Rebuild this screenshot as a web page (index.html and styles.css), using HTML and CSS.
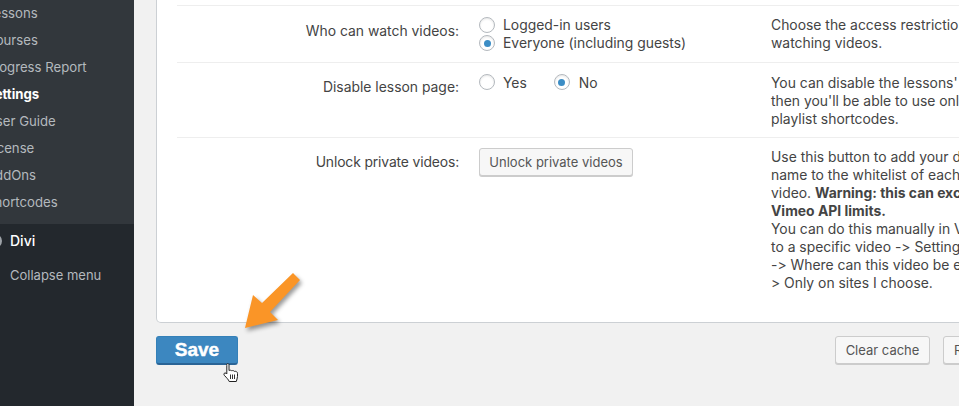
FILE: index.html
```html
<!DOCTYPE html>
<html lang="en">
<head>
<meta charset="utf-8">
<title>Settings</title>
<link rel="stylesheet" href="styles.css">
</head>
<body>
<div class="page">
  <nav class="sidebar">
    <ul class="submenu">
      <li>Lessons</li>
      <li>Courses</li>
      <li>Progress Report</li>
      <li class="current">Settings</li>
      <li>User Guide</li>
      <li>License</li>
      <li>AddOns</li>
      <li>Shortcodes</li>
    </ul>
    <div class="lower">
      <div class="divi"><span class="dot"></span><span>Divi</span></div>
      <div class="collapse">Collapse menu</div>
    </div>
  </nav>
  <main class="main">
    <section class="card">
      <div class="row row-top"></div>
      <div class="row row-who">
        <div class="label">Who can watch videos:</div>
        <div class="control stack">
          <label class="radio"><span class="dial"></span>Logged-in users</label>
          <label class="radio"><span class="dial on"></span>Everyone (including guests)</label>
        </div>
        <div class="desc">Choose the access restrictions for<br>watching videos.</div>
      </div>
      <div class="row row-disable">
        <div class="label">Disable lesson page:</div>
        <div class="control inline">
          <label class="radio"><span class="dial"></span>Yes</label>
          <label class="radio"><span class="dial on"></span>No</label>
        </div>
        <div class="desc">You can disable the lessons' page and<br>then you'll be able to use only the<br>playlist shortcodes.</div>
      </div>
      <div class="row row-unlock">
        <div class="label">Unlock private videos:</div>
        <div class="control"><button class="btn btn-unlock">Unlock private videos</button></div>
        <div class="desc">Use this button to add your domain<br>name to the whitelist of each private<br>video. <b>Warning: this can exceed your</b><br><b>Vimeo API limits.</b><br>You can do this manually in Vimeo: go<br>to a specific video -&gt; Settings -&gt; Privacy<br>-&gt; Where can this video be embedded -<br>&gt; Only on sites I choose.</div>
      </div>
    </section>
    <div class="actions">
      <button class="save">Save</button>
      <div class="side-actions">
        <button class="btn">Clear cache</button>
        <button class="btn">Reset</button>
      </div>
    </div>
  </main>
  <svg class="arrow" width="70" height="70" viewBox="240 268 70 70" aria-hidden="true">
    <path d="M293 273L300 280L270 312L278 320L245 328L253 295L262 303Z" fill="#fa9527"/>
  </svg>
  <svg class="pointer" width="16" height="20" viewBox="0 0 16 20" aria-hidden="true">
    <path d="M3.500 1.500C4 .5 5.500 .5 6 1.500V7.500C7 7 8.200 7.200 8.800 7.800C9.800 7.300 11 7.700 11.500 8.400C12.800 8 14.500 8.700 14.500 10.500V13.500C14.500 15.500 13.600 16.500 13.300 18.500H6.200C5.400 16.500 3.800 15 1.300 12.300C.2 10.800 1.600 9.300 3 10.200L3.800 11V2.500Z" fill="#fff" stroke="#222" stroke-width="1"/>
    <path d="M7.500 11.500V16M9.500 11.500V16M11.500 11.500V16" stroke="#333" stroke-width="1"/>
  </svg>
</div>
</body>
</html>
```

FILE: styles.css
```css
* { box-sizing: border-box; }
html, body { margin: 0; padding: 0; }
body {
  width: 959px;
  height: 406px;
  overflow: hidden;
  background: #f1f1f1;
  font-family: Inter, "Liberation Sans", sans-serif;
  font-size: 13.9px;
  font-variant-ligatures: none;
  font-feature-settings: "calt" 0;
  line-height: 18px;
  color: #444;
}
.page { position: relative; display: flex; width: 959px; height: 406px; overflow: hidden; }

.sidebar {
  flex: 0 0 134px;
  display: flex;
  flex-direction: column;
  background: #32373c;
  overflow: hidden;
}
.submenu { list-style: none; margin: 0; padding: 0; height: 224px; font-size: 13.2px; color: #b4b9be; }
.submenu li { height: 27px; line-height: 27px; margin-left: -14px; white-space: nowrap; }
.submenu .current { color: #fff; font-weight: 700; }
.lower { flex: 1; background: #23282d; }
.divi { display: flex; align-items: center; height: 34px; color: #fff; font-size: 14px; font-weight: 500; }
.dot { width: 14px; height: 14px; margin: 0 8px 0 -12px; border-radius: 50%; border: 3px solid #9ea3a8; }
.collapse { margin: 0 0 0 10px; height: 34px; line-height: 34px; font-size: 13px; color: #b4b9be; }

.main { flex: 0 0 825px; padding-left: 22px; }
.card {
  width: 860px;
  height: 323px;
  background: #fff;
  border: 1px solid #ccd0d4;
  border-top: 0;
  border-radius: 0 0 0 5px;
  padding: 0 0 0 20px;
}
.row { display: flex; border-bottom: 1px solid #eee; }
.row-top { height: 6px; }
.row-who { height: 57px; padding-top: 10px; }
.row-disable { height: 75px; padding-top: 11px; }
.row-unlock { border-bottom: 0; padding-top: 10px; }
.label { flex: 0 0 282px; text-align: right; white-space: nowrap; }
.row-who .label { padding-top: 6px; }
.row-disable .label { padding-top: 4px; }
.row-unlock .label { padding-top: 5px; letter-spacing: -.14px; }
.control { flex: 0 0 312px; padding-left: 20px; }
.stack { display: flex; flex-direction: column; }
.inline { display: flex; gap: 27px; }
.inline .radio:last-child .dial { margin-right: 9px; }
.inline .dial { top: -1px; }
.desc { white-space: nowrap; }
.radio { display: flex; align-items: center; height: 18px; white-space: nowrap; }
.dial {
  flex: none;
  position: relative;
  width: 16px;
  height: 16px;
  margin-right: 8px;
  border: 1px solid #b4b9be;
  border-radius: 50%;
  background: #fff;
  box-shadow: inset 0 1px 2px rgba(0,0,0,.1);
}
.dial.on::after {
  content: "";
  position: absolute;
  left: 3.500px;
  top: 3.500px;
  width: 7px;
  height: 7px;
  border-radius: 50%;
  background: #3c8dc5;
}
.btn {
  height: 28px;
  padding: 0 10px;
  border: 1px solid #ccc;
  border-radius: 3px;
  background: #f7f7f7;
  box-shadow: 0 1px 0 #ccc;
  font: inherit;
  font-size: 13px;
  color: #555;
  white-space: nowrap;
}
.btn-unlock { width: 154px; padding: 0; }
.actions { display: flex; justify-content: space-between; width: 860px; padding-top: 13px; }
.save {
  width: 82px;
  height: 29px;
  padding: 0;
  border: 1px solid #3480b8;
  border-bottom: 2px solid #2a6496;
  border-radius: 3px;
  background: #3c87c0;
  color: #fff;
  font-family: "Liberation Sans", sans-serif;
  font-size: 19px;
  font-weight: 700;
  -webkit-text-stroke: .4px #fff;
}
.side-actions { display: flex; gap: 13px; }
.side-actions .btn:first-child { width: 95px; padding: 0; }
.side-actions .btn:last-child { width: 73px; text-align: left; }

.arrow { position: absolute; left: 240px; top: 268px; filter: drop-shadow(2px 3px 2px rgba(0,0,0,.4)); }
.pointer { position: absolute; left: 223px; top: 363px; }
```
